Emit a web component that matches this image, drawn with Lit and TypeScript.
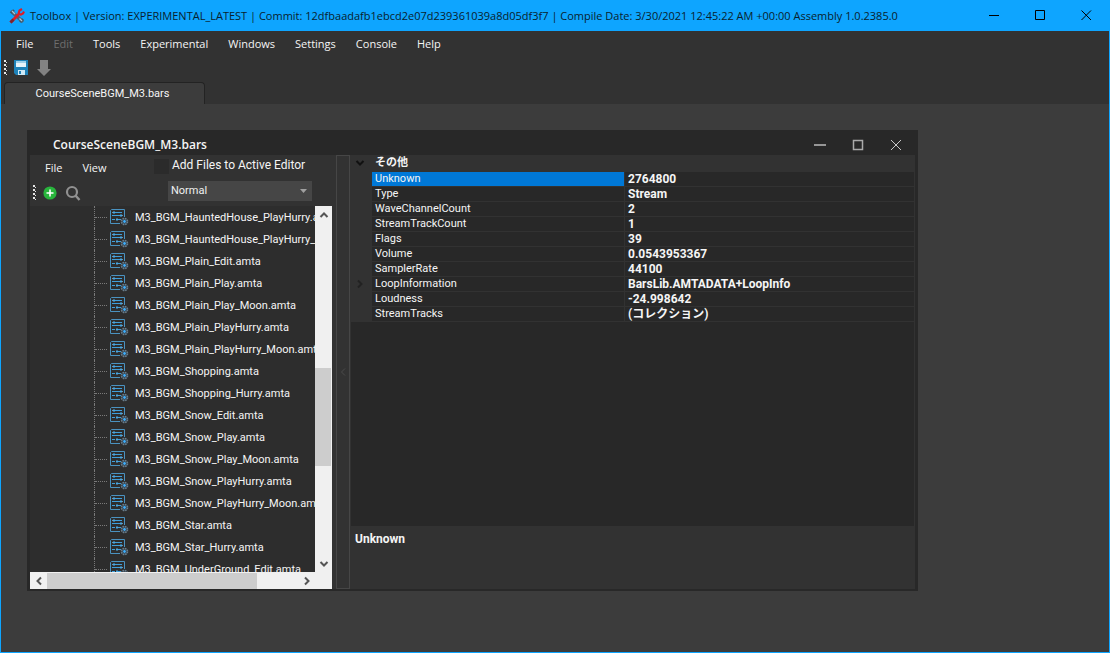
import { LitElement, html, css, svg } from "lit";
import { customElement } from "lit/decorators.js";
import { classMap } from "lit/directives/class-map.js";

const MENUS = ["File", "Edit", "Tools", "Experimental", "Windows", "Settings", "Console", "Help"];

const FILES = [
  "M3_BGM_HauntedHouse_PlayHurry.amta",
  "M3_BGM_HauntedHouse_PlayHurry_Moon.amta",
  "M3_BGM_Plain_Edit.amta",
  "M3_BGM_Plain_Play.amta",
  "M3_BGM_Plain_Play_Moon.amta",
  "M3_BGM_Plain_PlayHurry.amta",
  "M3_BGM_Plain_PlayHurry_Moon.amta",
  "M3_BGM_Shopping.amta",
  "M3_BGM_Shopping_Hurry.amta",
  "M3_BGM_Snow_Edit.amta",
  "M3_BGM_Snow_Play.amta",
  "M3_BGM_Snow_Play_Moon.amta",
  "M3_BGM_Snow_PlayHurry.amta",
  "M3_BGM_Snow_PlayHurry_Moon.amta",
  "M3_BGM_Star.amta",
  "M3_BGM_Star_Hurry.amta",
  "M3_BGM_UnderGround_Edit.amta",
];

const PROPS: { name: string; value: string; selected?: boolean; expandable?: boolean }[] = [
  { name: "Unknown", value: "2764800", selected: true },
  { name: "Type", value: "Stream" },
  { name: "WaveChannelCount", value: "2" },
  { name: "StreamTrackCount", value: "1" },
  { name: "Flags", value: "39" },
  { name: "Volume", value: "0.0543953367" },
  { name: "SamplerRate", value: "44100" },
  { name: "LoopInformation", value: "BarsLib.AMTADATA+LoopInfo", expandable: true },
  { name: "Loudness", value: "-24.998642" },
  { name: "StreamTracks", value: "(コレクション)" },
];

const base = css`
  * {
    box-sizing: border-box;
  }
  button {
    display: flex;
    align-items: center;
    justify-content: center;
    padding: 0;
    border: 0;
    background: none;
    color: inherit;
    font: inherit;
  }
  svg {
    display: block;
  }
`;

const chevron = (d: string, color: string, width = 2) => svg`
  <svg width="10" height="10" viewBox="0 0 10 10" fill="none" stroke=${color} stroke-width=${width}>
    <path d=${d} />
  </svg>`;

const UP = "M1.5 7 5 3.5 8.500 7";
const DOWN = "M1.5 3 5 6.500 8.500 3";
const LEFT = "M7 1.500 3.500 5 7 8.500";
const RIGHT = "M3 1.500 6.500 5 3 8.500";

const grip = html`<svg width="3" height="16" viewBox="0 0 3 16" fill="#e6e6e6">
  <path d="M0 0h2v2H0zM0 4h2v2H0zM0 8h2v2H0zM0 12h2v2H0zM2 2h1v1H2zM2 6h1v1H2zM2 10h1v1H2zM2 14h1v1H2z" />
</svg>`;

@customElement("file-tree")
export class FileTree extends LitElement {
  static styles = [
    base,
    css`
      :host {
        display: grid;
        grid-template-columns: minmax(0, 1fr) 17px;
        grid-template-rows: minmax(0, 1fr) 17px;
        min-height: 0;
        background: #2d2d2d;
        font-size: 11px;
      }
      .rows {
        overflow: hidden;
        margin: 0;
        padding: 0;
        list-style: none;
      }
      .row {
        display: grid;
        grid-template-columns: 65px 12px 18px auto;
        align-items: center;
        height: 22px;
        white-space: nowrap;
      }
      .stem {
        height: 22px;
        border-right: 1px dotted #7a7a7a;
      }
      .branch {
        border-top: 1px dotted #7a7a7a;
      }
      .icon {
        margin-left: 3px;
      }
      .name {
        padding: 1px 0 0 10px;
      }
      .vbar,
      .hbar {
        display: flex;
        background: #f0f0f0;
      }
      .vbar {
        flex-direction: column;
      }
      .hbar {
        grid-column: 1 / -1;
        padding-right: 17px;
      }
      .step {
        flex: 0 0 17px;
      }
      .vtrack {
        flex: 1;
        display: grid;
        grid-template-rows: 145fr 97fr 89fr;
      }
      .htrack {
        flex: 1;
        display: grid;
        grid-template-columns: 210fr 41fr;
      }
      .vthumb {
        grid-row: 2;
        margin: 0 1px 0 0;
        background: #cdcdcd;
      }
      .hthumb {
        background: #cdcdcd;
        margin-top: 1px;
      }
    `,
  ];

  icon() {
    return html`<svg class="icon" width="19" height="18" viewBox="0 0 19 18" fill="none">
      <path d="M10 15.500H.5V2.500L1.500 1.500H14.500V9" stroke="#4a92c0" />
      <path d="M5 4.500H12M2 7.500H10M2 11.500H5M8 11.500H11" stroke="#3f9fdc" />
      <path d="M2 4.500H4M12 7.500H13" stroke="#6f93aa" />
      <path d="M3 3.500h2v2H3zM10 6.500h2v2h-2zM6 10.500h2v2H6z" fill="#4aa6e0" />
      <circle cx="14.500" cy="13.500" r="3" stroke="#6b7f8e" stroke-width="1.600" stroke-dasharray="1.600 .75" />
      <circle cx="14.500" cy="13.500" r="2.400" stroke="#4d6272" />
      <circle cx="14.500" cy="13.500" r="1.400" fill="#3fb0ff" />
    </svg>`;
  }

  render() {
    return html`
      <ul class="rows">
        ${FILES.map(
          (f) => html`<li class="row">
            <span class="stem"></span><span class="branch"></span>${this.icon()}<span class="name">${f}</span>
          </li>`,
        )}
      </ul>
      <div class="vbar">
        <button class="step" aria-label="Scroll up">${chevron(UP, "#555")}</button>
        <div class="vtrack"><div class="vthumb"></div></div>
        <button class="step" aria-label="Scroll down">${chevron(DOWN, "#555")}</button>
      </div>
      <div class="hbar">
        <button class="step" aria-label="Scroll left">${chevron(LEFT, "#555")}</button>
        <div class="htrack"><div class="hthumb"></div></div>
        <button class="step" aria-label="Scroll right">${chevron(RIGHT, "#555")}</button>
      </div>
    `;
  }
}

@customElement("property-grid")
export class PropertyGrid extends LitElement {
  static styles = [
    base,
    css`
      :host {
        display: flex;
        flex-direction: column;
        background: #282828;
        border-right: 1px solid #323232;
      }
      .scroll {
        flex: 1;
      }
      .grid {
        width: 100%;
        border-collapse: separate;
        border-spacing: 0;
        table-layout: fixed;
      }
      .gutter {
        width: 21px;
      }
      .label {
        width: 253px;
      }
      th,
      td {
        height: 15px;
        padding: 0 0 0 3px;
        border-bottom: 1px solid #323232;
        line-height: 14px;
        text-align: left;
        font-weight: 400;
        white-space: nowrap;
      }
      .category th {
        height: 17px;
        background: #323232;
        font-weight: 700;
        font-size: 11px;
        line-height: 16px;
      }
      .toggle {
        padding: 0 0 0 4px;
        background: #323232;
      }
      .key {
        border-right: 1px solid #323232;
        font-size: 11px;
      }
      .selected .key {
        background: #0078d7;
      }
      .value {
        font-weight: 700;
      }
      .help {
        height: 63px;
        padding: 5px 4px;
        background: #323232;
        font-weight: 700;
        line-height: 16px;
      }
    `,
  ];

  render() {
    return html`
      <div class="scroll">
        <table class="grid">
          <colgroup>
            <col class="gutter" />
            <col class="label" />
            <col />
          </colgroup>
          <tbody>
            <tr class="category">
              <td class="toggle"><button aria-label="Collapse">${chevron(DOWN, "#111")}</button></td>
              <th colspan="2">その他</th>
            </tr>
            ${PROPS.map(
              (p) => html`<tr class=${classMap({ selected: !!p.selected })}>
                <td class="toggle">
                  ${p.expandable ? html`<button aria-label="Expand">${chevron(RIGHT, "#222")}</button>` : ""}
                </td>
                <th class="key" scope="row">${p.name}</th>
                <td class="value">${p.value}</td>
              </tr>`,
            )}
          </tbody>
        </table>
      </div>
      <div class="help">Unknown</div>
    `;
  }
}

@customElement("editor-window")
export class EditorWindow extends LitElement {
  static styles = [
    base,
    css`
      :host {
        display: grid;
        grid-template-rows: 25px minmax(0, 1fr);
        padding: 0 3px 2px;
        background: #282828;
        font: 12px/16px Roboto, "Noto Sans CJK JP", sans-serif;
      }
      .title {
        display: flex;
        align-items: center;
        padding: 4px 0 0 23px;
        font: 600 12px/18px "Open Sans", sans-serif;
      }
      .caption {
        flex: 1;
      }
      .win {
        width: 38px;
        height: 22px;
      }
      .body {
        display: grid;
        grid-template-columns: 302px 14px minmax(0, 1fr);
        grid-template-rows: minmax(0, 1fr);
        column-gap: 4px;
        background: #323232;
      }
      .left {
        display: grid;
        grid-template-rows: 51px minmax(0, 1fr);
      }
      .head {
        display: grid;
        grid-template-columns: 124px 158px;
      }
      .menu {
        display: flex;
        gap: 20px;
        height: 26px;
        padding-left: 15px;
        font: 11px/16px "Open Sans", sans-serif;
      }
      .tools {
        display: flex;
        align-items: center;
        height: 24px;
        padding-left: 3px;
      }
      .add {
        margin-left: 7px;
      }
      .find {
        margin-left: 8px;
      }
      .check {
        display: flex;
        gap: 3px;
        height: 20px;
        align-items: center;
        white-space: nowrap;
      }
      .box {
        appearance: none;
        width: 15px;
        height: 15px;
        margin: 3px 0 0;
        background: #2b2b2b;
      }
      .combo {
        display: grid;
        margin: 6px 0 0 14px;
      }
      .mode,
      .arrow {
        grid-area: 1 / 1;
      }
      .mode {
        appearance: none;
        height: 20px;
        padding: 0 3px;
        border: 0;
        border-radius: 0;
        background: #464646;
        color: #f0f0f0;
        font: inherit;
        font-size: 11px;
      }
      .arrow {
        justify-self: end;
        align-self: center;
        margin-right: 5px;
        pointer-events: none;
      }
      .splitter {
        display: flex;
        align-items: center;
        justify-content: center;
        border: 1px solid #464646;
      }
      .grid {
        margin-left: -3px;
      }
    `,
  ];

  render() {
    return html`
      <header class="title">
        <span class="caption">CourseSceneBGM_M3.bars</span>
        <button class="win" aria-label="Minimize">
          <svg width="12" height="12"><rect y="5" width="12" height="2" fill="#969696" /></svg>
        </button>
        <button class="win" aria-label="Maximize">
          <svg width="12" height="12"><rect x="1.500" y="1.500" width="9" height="9" fill="none" stroke="#aaa" stroke-width="1.500" /></svg>
        </button>
        <button class="win" aria-label="Close">
          <svg width="12" height="12"><path d="M1 1 11 11M11 1 1 11" stroke="#c8c8c8" /></svg>
        </button>
      </header>
      <div class="body">
        <section class="left">
          <div class="head">
            <div>
              <nav class="menu"><button>File</button><button>View</button></nav>
              <div class="tools">
                ${grip}
                <button class="add" aria-label="Add">
                  <svg width="14" height="14">
                    <circle cx="7" cy="7" r="6.600" fill="#28b43c" />
                    <path d="M7 3.500V10.500M3.500 7H10.500" stroke="#fff" stroke-width="1.600" />
                  </svg>
                </button>
                <button class="find" aria-label="Find">
                  <svg width="17" height="17" fill="none" stroke="#919191">
                    <circle cx="7" cy="7" r="5" stroke-width="2.200" />
                    <path d="M10.500 10.500 14.500 15" stroke-width="2.400" />
                  </svg>
                </button>
              </div>
            </div>
            <div>
              <label class="check"><input class="box" type="checkbox" />Add Files to Active Editor</label>
              <div class="combo">
                <select class="mode" aria-label="Mode">
                  <option>Normal</option>
                </select>
                <svg class="arrow" width="7" height="4"><path d="M0 0H7L3.500 4Z" fill="#a0a0a0" /></svg>
              </div>
            </div>
          </div>
          <file-tree></file-tree>
        </section>
        <div class="splitter">${chevron(LEFT, "#4b4b4b", 1)}</div>
        <property-grid class="grid"></property-grid>
      </div>
    `;
  }
}

@customElement("app-root")
export class AppRoot extends LitElement {
  static styles = [
    base,
    css`
      :host {
        display: grid;
        grid-template-rows: 31px auto minmax(0, 1fr);
        height: 100vh;
        box-sizing: border-box;
        border: 1px solid #0ea5ff;
        border-top: 0;
        background: #3c3c3c;
        color: #f5f5f5;
        font: 11px/16px "Open Sans", sans-serif;
      }
      .titlebar {
        display: flex;
        align-items: center;
        padding-left: 8px;
        background: #0ea5ff;
        color: #0a1e2d;
      }
      .caption {
        flex: 1;
        padding-left: 5px;
        white-space: nowrap;
      }
      .win {
        width: 46px;
        height: 31px;
      }
      .chrome {
        background: #323232;
      }
      .menu {
        display: flex;
        gap: 20px;
        height: 26px;
        padding-left: 15px;
      }
      .off {
        color: #6e6e6e;
      }
      .tools {
        display: flex;
        align-items: center;
        height: 21px;
        padding-left: 3px;
      }
      .save {
        margin-left: 7px;
      }
      .down {
        margin-left: 9px;
      }
      .tabs {
        display: flex;
        padding: 4px 0 0 3px;
      }
      .tab {
        width: 201px;
        height: 22px;
        padding-right: 4px;
        border: 1px solid #232323;
        border-bottom: 0;
        border-radius: 4px 4px 0 0;
        background: #3c3c3c;
        font: 11px/16px Roboto, "Noto Sans CJK JP", sans-serif;
      }
      .desktop {
        position: relative;
        overflow: hidden;
      }
      .child {
        position: absolute;
        left: 26px;
        top: 26px;
        width: 891px;
        height: 461px;
      }
    `,
  ];

  render() {
    return html`
      <header class="titlebar">
        <svg width="16" height="16" viewBox="0 0 16 16" fill="none">
          <path d="M2 3 14 14" stroke="#4a6378" stroke-width="3.600" />
          <path d="M2 5 5 2M11 14 14 11" stroke="#3d5468" stroke-width="2.400" />
          <path d="M3 3 6 6M10.500 10.500 13 13" stroke="#a9c6d8" stroke-width="1.400" />
          <path d="M1.500 14.500 11 5" stroke="#dc1e28" stroke-width="2.800" />
          <path d="M1.500 14.500 4.500 11.500" stroke="#7c2430" stroke-width="2.800" />
          <path d="M9.500 5.500 10.500 2.500 13 1M11 7 14 5.500 15 3.500" stroke="#dc1e28" stroke-width="2.200" />
        </svg>
        <span class="caption"
          >Toolbox | Version: EXPERIMENTAL_LATEST | Commit: 12dfbaadafb1ebcd2e07d239361039a8d05df3f7 | Compile Date:
          3/30/2021 12:45:22 AM +00:00 Assembly 1.0.2385.0</span
        >
        <button class="win" aria-label="Minimize">
          <svg width="11" height="11"><path d="M0 5.500H10" stroke="#000" /></svg>
        </button>
        <button class="win" aria-label="Maximize">
          <svg width="11" height="11"><path d="M.5.500H9.500V9.500H.5Z" fill="none" stroke="#000" /></svg>
        </button>
        <button class="win" aria-label="Close">
          <svg width="11" height="11"><path d="M.5.500 10 10M10 .5.500 10" stroke="#000" /></svg>
        </button>
      </header>
      <div class="chrome">
        <nav class="menu">
          ${MENUS.map((m) => html`<button class=${classMap({ off: m === "Edit" })}>${m}</button>`)}
        </nav>
        <div class="tools">
          ${grip}
          <button class="save" aria-label="Save">
            <svg width="14" height="15">
              <path d="M0 0H14V15H2L0 13Z" fill="#1e82b9" />
              <path d="M2 1H12V7H2Z" fill="#e6f3fa" />
              <path d="M2 1H12V3H2Z" fill="#9fd0ea" />
              <path d="M4 10H11V15H4Z" fill="#cfe8f5" />
              <path d="M5 11H7V14H5Z" fill="#1e82b9" />
            </svg>
          </button>
          <button class="down" aria-label="Download">
            <svg width="14" height="16"><path d="M3 0H11V9H14L7 16 0 9H3Z" fill="#828282" /></svg>
          </button>
        </div>
        <div class="tabs"><button class="tab">CourseSceneBGM_M3.bars</button></div>
      </div>
      <main class="desktop">
        <editor-window class="child"></editor-window>
      </main>
    `;
  }
}
